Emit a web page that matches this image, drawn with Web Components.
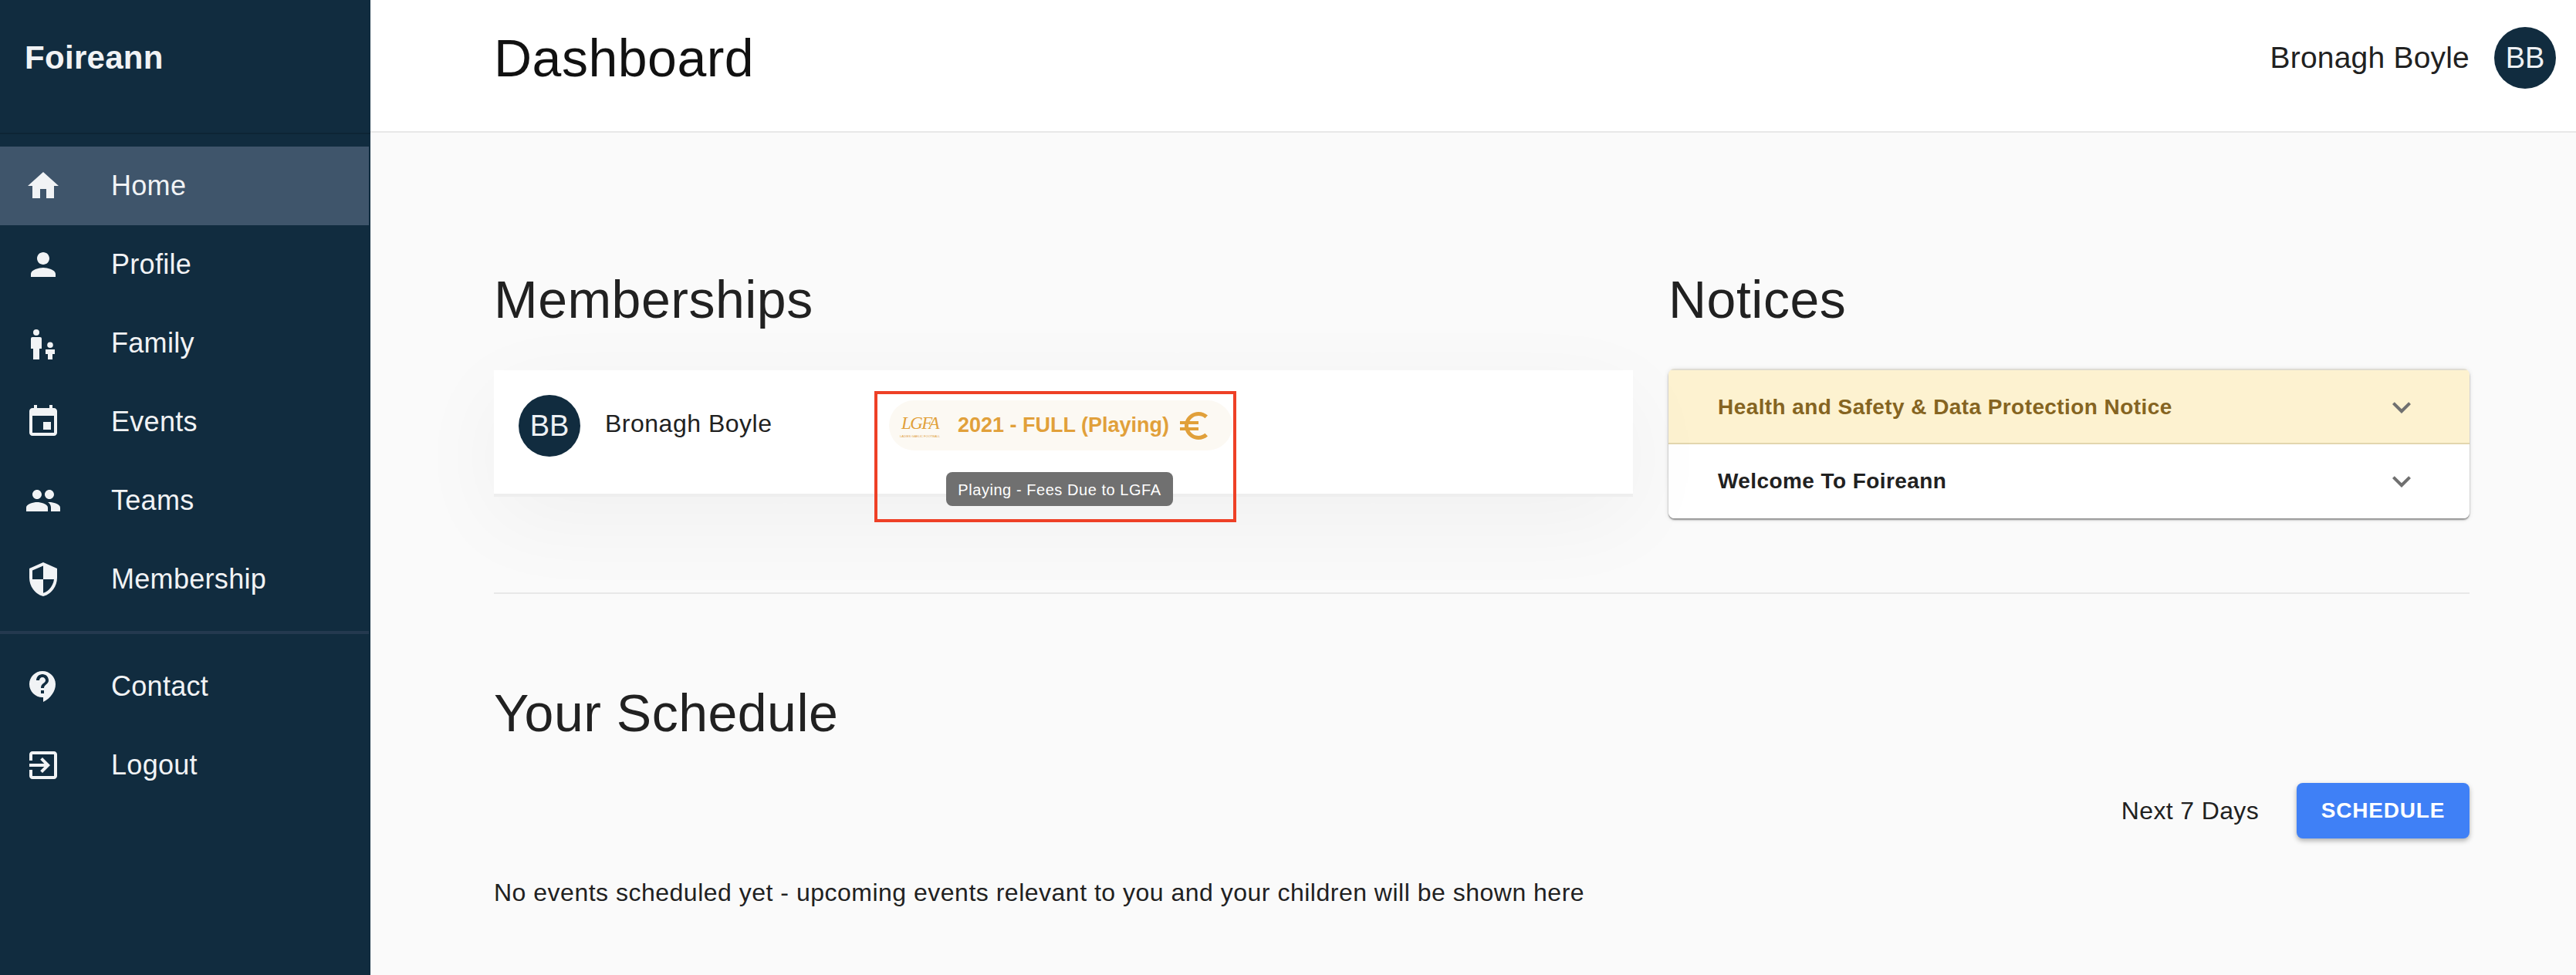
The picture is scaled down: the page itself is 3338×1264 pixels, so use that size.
<!DOCTYPE html>
<html lang="en"><head><meta charset="utf-8"><title>Foireann Dashboard</title>
<style>
html,body{margin:0;padding:0;height:100%;background:#fafafa;overflow:hidden}
body{font-family:"Liberation Sans",Arial,sans-serif;color:#212121}
</style></head>
<body>
<app-shell>
  <side-bar slot="side">
    <nav-item icon="home" active>Home</nav-item>
    <nav-item icon="person">Profile</nav-item>
    <nav-item icon="family">Family</nav-item>
    <nav-item icon="event">Events</nav-item>
    <nav-item icon="people">Teams</nav-item>
    <nav-item icon="security">Membership</nav-item>
    <nav-item slot="lower" icon="contact">Contact</nav-item>
    <nav-item slot="lower" icon="exit">Logout</nav-item>
  </side-bar>
  <top-bar slot="top" title="Dashboard" user="Bronagh Boyle" initials="BB"></top-bar>
  <dash-section heading="Memberships" slot="left">
    <membership-card name="Bronagh Boyle" initials="BB" label="2021 - FULL (Playing)" tip="Playing - Fees Due to LGFA"></membership-card>
  </dash-section>
  <dash-section heading="Notices" slot="right" tight>
    <notice-panel>
      <notice-row warn>Health and Safety &amp; Data Protection Notice</notice-row>
      <notice-row>Welcome To Foireann</notice-row>
    </notice-panel>
  </dash-section>
  <schedule-section slot="bottom" heading="Your Schedule" range="Next 7 Days" action="SCHEDULE" empty="No events scheduled yet - upcoming events relevant to you and your children will be shown here"></schedule-section>
</app-shell>
<script>
const PATHS={
home:'M10 20v-6h4v6h5v-8h3L12 3 2 12h3v8z',
person:'M12 12c2.21 0 4-1.79 4-4s-1.79-4-4-4-4 1.79-4 4 1.79 4 4 4zm0 2c-2.67 0-8 1.34-8 4v2h16v-2c0-2.66-5.33-4-8-4z',
family:'M7.5 3a2 2 0 1 1 0 4 2 2 0 0 1 0-4zM5 8h5a1 1 0 0 1 1 1v6.5H9.5v7h-4v-7H4V9a1 1 0 0 1 1-1zM16.5 11.2a1.9 1.9 0 1 1 0 3.8 1.9 1.9 0 0 1 0-3.8zM13.5 16h6v3h-1.5v3.5h-3V19h-1.5z',
event:'M17 12h-5v5h5v-5zM16 1v2H8V1H6v2H5c-1.11 0-1.99.9-1.99 2L3 19c0 1.1.89 2 2 2h14c1.1 0 2-.9 2-2V5c0-1.1-.9-2-2-2h-1V1h-2zm3 18H5V8h14v11z',
people:'M16 11c1.66 0 2.99-1.34 2.99-3S17.66 5 16 5c-1.66 0-3 1.34-3 3s1.34 3 3 3zm-8 0c1.66 0 2.99-1.34 2.99-3S9.66 5 8 5C6.34 5 5 6.34 5 8s1.34 3 3 3zm0 2c-2.33 0-7 1.17-7 3.5V19h14v-2.5c0-2.33-4.67-3.5-7-3.5zm8 0c-.29 0-.62.02-.97.05 1.16.84 1.97 1.97 1.97 3.45V19h6v-2.5c0-2.33-4.67-3.5-7-3.5z',
security:'M12 1L3 5v6c0 5.55 3.84 10.74 9 12 5.16-1.26 9-6.45 9-12V5l-9-4zm0 10.99h7c-.53 4.12-3.28 7.79-7 8.94V12H5V6.3l7-3.11v8.8z',
contact:'M11.5 2C6.81 2 3 5.81 3 10.5S6.81 19 11.5 19h.5v3c4.86-2.34 8-7 8-11.5C20 5.81 16.19 2 11.5 2zm1 14.5h-2v-2h2v2zm0-3.5h-2c0-3.25 3-3 3-5 0-1.1-.9-2-2-2s-2 .9-2 2h-2c0-2.21 1.79-4 4-4s4 1.79 4 4c0 2.5-3 2.75-3 5z',
exit:'M10.09 15.59L11.5 17l5-5-5-5-1.41 1.41L12.67 11H3v2h9.67l-2.58 2.59zM19 3H5c-1.11 0-2 .9-2 2v4h2V5h14v14H5v-4H3v4c0 1.1.89 2 2 2h14c1.1 0 2-.9 2-2V5c0-1.11-.9-2-2-2z',
euro:'M15 18.5c-2.51 0-4.68-1.42-5.76-3.5H15v-2H8.58c-.05-.33-.08-.66-.08-1s.03-.67.08-1H15V9H9.24C10.32 6.92 12.5 5.5 15 5.5c1.61 0 3.09.59 4.23 1.57L21 5.3C19.41 3.87 17.3 3 15 3c-3.92 0-7.24 2.51-8.48 6H3v2h3.06c-.04.33-.06.66-.06 1 0 .34.02.67.06 1H3v2h3.52c1.24 3.49 4.56 6 8.48 6 2.31 0 4.41-.87 6-2.3l-1.78-1.77c-1.13.98-2.6 1.57-4.22 1.57z',
expand:'M16.59 8.59L12 13.17 7.41 8.59 6 10l6 6 6-6z'};
function def(name,render){customElements.define(name,class extends HTMLElement{
  connectedCallback(){ if(this.shadowRoot) return; const r=this.attachShadow({mode:'open'}); r.innerHTML=render(this); }
});}
def('x-icon',e=>`<style>:host{display:block;width:${e.getAttribute('size')||48}px;height:${e.getAttribute('size')||48}px;flex:none}svg{display:block;width:100%;height:100%;fill:currentColor}</style><svg viewBox="0 0 24 24" aria-hidden="true"><path d="${PATHS[e.getAttribute('name')]}"/></svg>`);
def('x-avatar',e=>`<style>:host{display:flex;flex:none;width:80px;height:80px;border-radius:50%;background:#112c3f;color:#eef1f4;align-items:center;justify-content:center;font-size:38px;line-height:1}</style><slot></slot>`);
def('app-shell',()=>`<style>
:host{display:flex;width:3338px;height:1264px;overflow:hidden;background:#fafafa}
.main{flex:1;min-width:0;display:flex;flex-direction:column}
.body{flex:1;padding:176px 138px 0 160px}
.cols{display:grid;grid-template-columns:1476px 1038px;column-gap:46px;padding-bottom:96px;border-bottom:2px solid #e8e8e8}
</style><slot name="side"></slot><div class="main"><slot name="top"></slot><div class="body"><div class="cols"><slot name="left"></slot><slot name="right"></slot></div><slot name="bottom"></slot></div></div>`);
def('side-bar',()=>`<style>
:host{display:flex;flex-direction:column;flex:none;width:480px;height:100%;background:#112c3f;color:#f1f3f5;box-sizing:border-box;padding-right:2px}
.brand{height:174px;box-sizing:border-box;margin-right:-2px;padding:0 32px 22px;display:flex;align-items:center;font-size:42px;font-weight:700;letter-spacing:.3px;border-bottom:2px solid #0d2535}
.list{padding-top:16px}
hr{border:0;height:4px;background:#24394f;margin:16px 0 17px}
</style><div class="brand">Foireann</div><div class="list"><slot></slot></div><hr><div><slot name="lower"></slot></div>`);
def('nav-item',e=>`<style>
:host{display:flex;align-items:center;height:102px;padding-left:32px;font-size:36px;letter-spacing:.3px;${e.hasAttribute('active')?'background:#3f556b;':''}}
span{margin-left:64px}
</style><x-icon name="${e.getAttribute('icon')}"></x-icon><span><slot></slot></span>`);
def('top-bar',e=>`<style>
:host{display:flex;align-items:center;box-sizing:border-box;height:172px;background:#fff;border-bottom:2px solid #e8e8e8;padding:0 26px 20px 160px}
h1{margin:0;flex:1;font-size:68px;font-weight:400;letter-spacing:.5px;color:#111}
.u{font-size:39px;letter-spacing:.2px;margin-right:32px;color:#212121}
</style><h1>${e.getAttribute('title')}</h1><span class="u">${e.getAttribute('user')}</span><x-avatar>${e.getAttribute('initials')}</x-avatar>`);
def('dash-section',e=>`<style>
:host{display:block}
h2{margin:0 0 ${e.hasAttribute('tight')?50:52}px;font-size:68px;line-height:80px;font-weight:400;letter-spacing:.5px;color:#212121}
</style><h2>${e.getAttribute('heading')}</h2><slot></slot>`);
def('membership-card',e=>`<style>
:host{display:flex;position:relative;box-sizing:border-box;height:164px;padding:32px 0 0 32px;background:#fff;border-bottom:4px solid #eee;box-shadow:0 30px 120px rgba(0,0,0,.045)}
.n{margin-left:32px;font-size:32px;letter-spacing:.5px;height:76px;line-height:74px;width:368px;flex:none;color:#212121}
.pill{position:absolute;left:512px;top:39px;box-sizing:border-box;width:445px;height:65px;border-radius:33px;background:#fcf9f3;color:#e1a03a;display:flex;align-items:center;padding-left:16px;font-weight:700;font-size:27px;letter-spacing:0}
.logo{width:48px;margin-right:25px;flex:none;display:flex;flex-direction:column;align-items:center;line-height:1}
.logo b{font:italic 400 23px "Liberation Serif",serif;letter-spacing:-1.6px}
.logo i{font:400 4px "Liberation Sans",sans-serif;white-space:nowrap;letter-spacing:0;margin-top:1px}
x-icon{margin-left:8px}
.tip{position:absolute;left:586px;top:132px;box-sizing:border-box;width:294px;height:44px;padding-top:2px;background:#707070;color:#fff;border-radius:8px;font-size:20px;letter-spacing:.55px;display:flex;align-items:center;justify-content:center;z-index:2}
.mark{position:absolute;left:493px;top:27px;width:469px;height:170px;box-sizing:border-box;border:4px solid #ee4026;z-index:3}
</style><x-avatar>${e.getAttribute('initials')}</x-avatar><div class="n">${e.getAttribute('name')}</div>
<div class="pill"><div class="logo"><b>LGFA</b><i>LADIES GAELIC FOOTBALL</i></div><span>${e.getAttribute('label')}</span><x-icon name="euro"></x-icon></div>
<div class="tip">${e.getAttribute('tip')}</div><div class="mark"></div>`);
def('notice-panel',()=>`<style>:host{display:block;border-radius:8px;overflow:hidden;box-shadow:0 2px 2px rgba(0,0,0,.4),0 1px 6px rgba(0,0,0,.12);background:#fff}</style><slot></slot>`);
def('notice-row',e=>{const w=e.hasAttribute('warn');return `<style>
:host{display:flex;align-items:center;box-sizing:border-box;height:${w?98:96}px;padding:${w?'2px':'0'} 64px 0 64px;font-size:28px;font-weight:700;letter-spacing:.42px;${w?'background:#fdf2d0;color:#856421;border-top:2px solid #dfdcd2;border-bottom:2px solid #e2d6ae;':'background:#fff;color:#212121;'}}
span{flex:1}x-icon{color:#707070;margin-right:0}
</style><span><slot></slot></span><x-icon name="expand"></x-icon>`});
def('schedule-section',e=>`<style>
:host{display:block}
h2{margin:114px 0 0;font-size:68px;line-height:80px;font-weight:400;letter-spacing:.5px;color:#212121}
.row{display:flex;justify-content:flex-end;align-items:center;margin-top:51px}
.r{font-size:32px;letter-spacing:.35px;margin-right:49px}
button{all:unset;box-sizing:border-box;width:224px;height:72px;background:#3f80f6;color:#fff;border-radius:8px;text-align:center;font:700 28px "Liberation Sans",sans-serif;letter-spacing:.8px;box-shadow:0 3px 6px rgba(0,0,0,.3)}
p{margin:52px 0 0;font-size:32px;line-height:36px;letter-spacing:.5px;color:#212121}
</style><h2>${e.getAttribute('heading')}</h2><div class="row"><span class="r">${e.getAttribute('range')}</span><button>${e.getAttribute('action')}</button></div><p>${e.getAttribute('empty')}</p>`);
</script>
</body></html>
